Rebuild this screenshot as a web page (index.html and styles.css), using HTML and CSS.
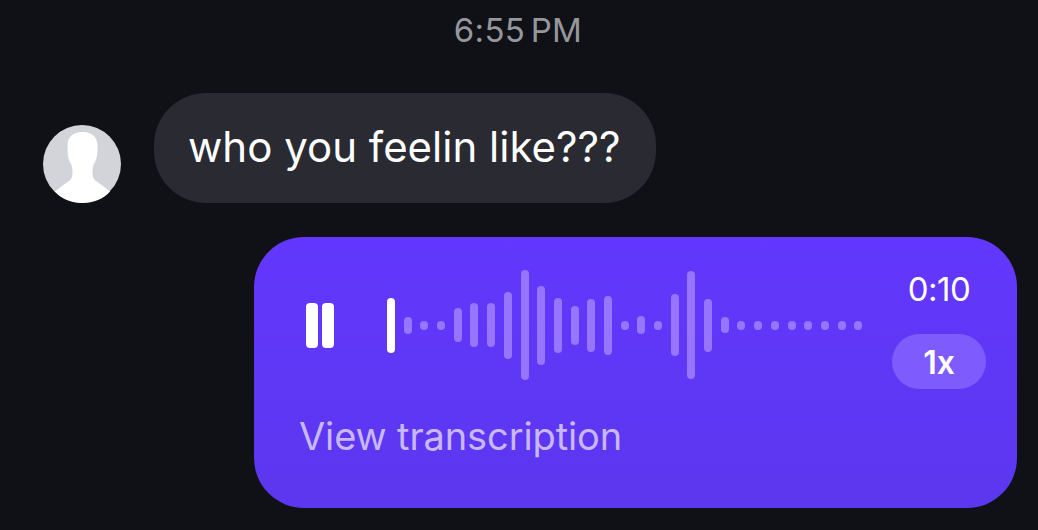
FILE: index.html
```html
<!DOCTYPE html>
<html lang="en">

<head>
  <meta charset="UTF-8">
  <meta name="viewport" content="width=device-width, initial-scale=1.0">
  <title>Messages</title>
  <link rel="stylesheet" href="styles.css">
</head>

<body>
  <main class="thread">
    <p class="timestamp">6:55 PM</p>

    <div class="incoming">
      <svg class="avatar" viewBox="0 0 78 78" aria-hidden="true">
        <circle cx="39" cy="39" r="39" fill="#d3d4da" />
        <path fill="#fff" d="M39 7c-9 0-14.500 5-14.500 14 0 8 .5 13 3 17 1.500 3 2 5 2 8 0 5-.5 8-3.500 10-4 3-9 6-14 10.500 6.500 7.500 16.500 11.500 27.500 11.500s21-4 27.500-11.500c-5-4.500-10-7.500-14-10.500-3-2-3.500-5-3.500-10 0-3 .5-5 2-8 2.500-4 3-9 3-17 0-9-5.500-14-14.500-14z" />
      </svg>
      <div class="bubble">who you feelin like???</div>
    </div>

    <div class="voice">
      <div class="voice-top">
        <div class="pause"><span></span><span></span></div>
        <div class="wave">
          <span class="bar head" style="height:55px"></span>
          <span class="bar" style="height:17px"></span>
          <span class="bar" style="height:9px"></span>
          <span class="bar" style="height:9px"></span>
          <span class="bar" style="height:34px"></span>
          <span class="bar" style="height:44px"></span>
          <span class="bar" style="height:44px"></span>
          <span class="bar" style="height:67px"></span>
          <span class="bar" style="height:110px"></span>
          <span class="bar" style="height:79px"></span>
          <span class="bar" style="height:55px"></span>
          <span class="bar" style="height:39px"></span>
          <span class="bar" style="height:53px"></span>
          <span class="bar" style="height:59px"></span>
          <span class="bar" style="height:9px"></span>
          <span class="bar" style="height:18px"></span>
          <span class="bar" style="height:9px"></span>
          <span class="bar" style="height:62px"></span>
          <span class="bar" style="height:108px"></span>
          <span class="bar" style="height:53px"></span>
          <span class="bar" style="height:16px"></span>
          <span class="bar" style="height:9px"></span>
          <span class="bar" style="height:9px"></span>
          <span class="bar" style="height:9px"></span>
          <span class="bar" style="height:9px"></span>
          <span class="bar" style="height:9px"></span>
          <span class="bar" style="height:9px"></span>
          <span class="bar" style="height:9px"></span>
          <span class="bar" style="height:9px"></span>
        </div>
        <div class="controls">
          <span class="duration">0:10</span>
          <span class="speed">1x</span>
        </div>
      </div>
      <div class="transcription">View transcription</div>
    </div>
  </main>
</body>

</html>
```

FILE: styles.css
```css
/* Basic reset for body */
body {
  margin: 0;
  height: 530px;
  overflow: hidden;
  background-color: #101116;
  color: #ffffff;
  font-family: Inter, 'Liberation Sans', sans-serif;
}

.thread {
  display: flex;
  flex-direction: column;
  padding: 0 21px 0 43px;
}

.timestamp {
  margin: 0 24px 0 0;
  height: 93px;
  padding-top: 11px;
  box-sizing: border-box;
  text-align: center;
  font-size: 33px;
  line-height: 38px;
  letter-spacing: 0.3px;
  word-spacing: -4px;
  color: #96979c;
}

/* Incoming message */
.incoming {
  display: flex;
  align-items: flex-end;
  gap: 33px;
}

.avatar {
  width: 78px;
  height: 78px;
  flex: none;
}

.bubble {
  width: 502px;
  height: 110px;
  box-sizing: border-box;
  padding-left: 34px;
  border-radius: 52px;
  background-color: #2a2a32;
  font-size: 42px;
  line-height: 108px;
  white-space: nowrap;
}

/* Voice message */
.voice {
  align-self: flex-end;
  width: 763px;
  height: 271px;
  margin-top: 34px;
  box-sizing: border-box;
  padding: 33px 31px 0 45px;
  border-radius: 50px;
  background: linear-gradient(180deg, #6337fd 0%, #5b37ee 100%);
}

.voice-top {
  display: flex;
  align-items: flex-start;
  height: 110px;
}

.pause {
  display: flex;
  gap: 4px;
  margin: 33px 0 0 7px;
  flex: none;
}

.pause span {
  width: 12px;
  height: 45px;
  border-radius: 4px;
  background-color: #ffffff;
}

.wave {
  display: flex;
  align-items: center;
  gap: 8.7px;
  height: 110px;
  margin-left: 53px;
  flex: none;
}

.bar {
  width: 8px;
  border-radius: 4px;
  background-color: #9775ff;
}

.bar.head {
  background-color: #ffffff;
}

.controls {
  display: flex;
  flex-direction: column;
  align-items: center;
  margin-left: auto;
}

.duration {
  margin-top: -1px;
  font-size: 33px;
  line-height: 40px;
  letter-spacing: -0.5px;
}

.speed {
  width: 94px;
  height: 55px;
  margin-top: 25px;
  border-radius: 28px;
  background-color: #7d5bfd;
  text-align: center;
  font-size: 32px;
  font-weight: 600;
  line-height: 58px;
}

.transcription {
  margin-top: 34px;
  font-size: 38px;
  line-height: 44px;
  letter-spacing: -0.12px;
  color: #c8b8ff;
}
```
